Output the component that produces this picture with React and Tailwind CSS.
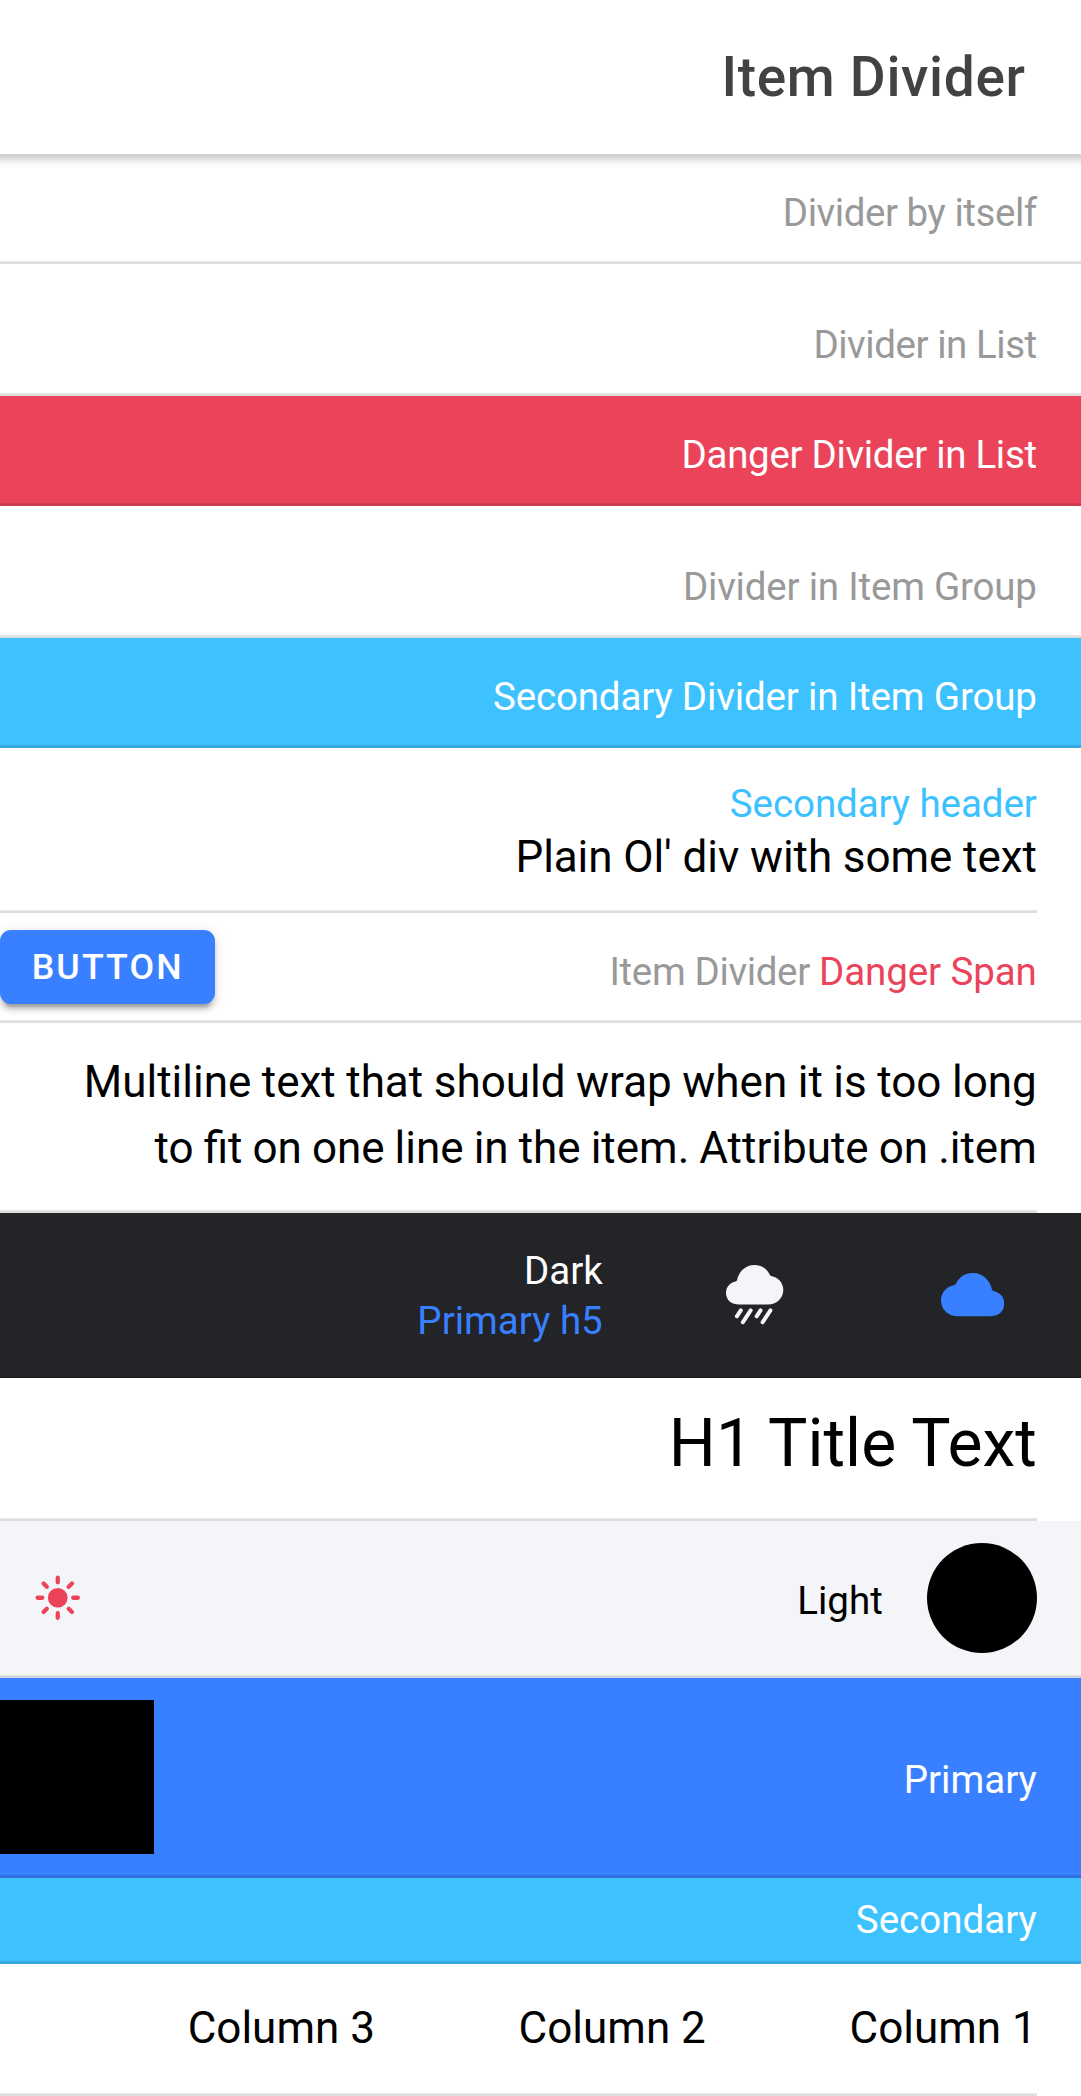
import { IoCloud, IoRainy, IoSunny } from "react-icons/io5";

const line = "shadow-[inset_0_-2.75px_0_rgba(0,0,0,0.13)]";
const small = "text-[38.5px] leading-[50px]";

function Divider({ children, className }) {
  return (
    <div className={`flex h-[110px] justify-end pr-11 pt-[34px] ${small} ${line} ${className}`}>
      {children}
    </div>
  );
}

function Item({ children, className }) {
  return (
    <div className={`mr-11 flex flex-col items-end text-right text-[44px] text-black ${line} ${className}`}>
      {children}
    </div>
  );
}

export default function App() {
  return (
    <div className="h-[2096px] w-[1081px] overflow-hidden bg-white font-[Roboto,sans-serif]">
      <div className="w-[1080.75px]">
        <header className="relative flex h-[154px] items-center justify-end bg-white pr-[55px]">
          <h1 className="text-[55px] font-medium leading-[64px] tracking-[0.0125em] text-[#424242]">Item Divider</h1>
          <div className="absolute inset-x-0 top-full h-[14px] bg-[linear-gradient(to_bottom,rgba(0,0,0,0.2)_0%,rgba(0,0,0,0.16)_22%,rgba(0,0,0,0.07)_50%,rgba(0,0,0,0.02)_75%,transparent_100%)]" />
        </header>

        <main>
          <Divider className="tracking-[-0.45px] text-[#999999]">Divider by itself</Divider>
          <section className="pt-[22px]">
            <Divider className="tracking-[-0.45px] text-[#999999]">Divider in List</Divider>
            <Divider className="bg-[#eb445a] tracking-[-0.32px] text-white">Danger Divider in List</Divider>
          </section>

          <section className="pt-[22px]">
            <Divider className="tracking-[-0.2px] text-[#999999]">Divider in Item Group</Divider>
            <Divider className="bg-[#3dc2ff] tracking-[-0.15px] text-white">Secondary Divider in Item Group</Divider>

            <Item className="h-[165px] pt-[31px]">
              <h2 className={`${small} tracking-[-0.08px] text-[#3dc2ff]`}>Secondary header</h2>
              <div className="leading-[56px] tracking-[-0.08px]">Plain Ol' div with some text</div>
            </Item>

            <div className={`flex h-[110px] justify-between pr-11 ${line}`}>
              <button className="mt-[16.5px] h-[74.25px] w-[214.5px] rounded-[11px] bg-[#3880ff] pl-px text-[35.75px] font-medium uppercase leading-[74px] tracking-[0.06em] text-white shadow-[0_8.25px_2.75px_-5.5px_rgba(0,0,0,0.2),0_5.5px_5.5px_0_rgba(0,0,0,0.14),0_2.75px_13.75px_0_rgba(0,0,0,0.12)]">
                Button
              </button>
              <div className={`pt-[34px] ${small} tracking-[-0.35px] text-[#999999]`}>
                Item Divider <span className="tracking-[-0.1px] text-[#eb445a]">Danger Span</span>
              </div>
            </div>

            <Item className="h-[189.75px] pt-[26px] leading-[66px]">
              <p className="whitespace-nowrap">
                <span className="[word-spacing:-0.4px]">Multiline text that should wrap when it is too long</span>
                <br />
                <span className="[word-spacing:-0.9px]">to fit on one line in the item. Attribute on .item</span>
              </p>
            </Item>

            <div className={`flex h-[165px] justify-end bg-[#222428] pr-[77px] text-right ${line}`}>
              <div className={`pt-[33px] ${small}`}>
                <div className="text-white">Dark</div>
                <h5 className="text-[#3880ff]">Primary h5</h5>
              </div>
              <IoRainy className="mb-[2px] ml-[120.5px] size-[63.25px] self-center text-[#f4f5f8]" />
              <IoCloud className="mb-[2px] ml-[154px] size-[63.25px] self-center text-[#3880ff]" />
            </div>

            <Item className="h-[143px] pt-[26px]">
              <h1 className="text-[66px] leading-[80px]">H1 Title Text</h1>
            </Item>

            <div className={`flex h-[156.75px] bg-[#f4f5f8] pr-11 ${line}`}>
              <IoSunny className="ml-[33px] mt-[52.25px] size-[49.5px] text-[#eb445a]" />
              <div className={`ml-auto mr-11 pt-[55px] ${small} text-black`}>Light</div>
              <div className="mt-[22px] size-[110px] rounded-full bg-black" />
            </div>

            <div className={`flex h-[200.75px] justify-between bg-[#3880ff] pr-11 ${line}`}>
              <div className="mt-[22px] size-[154px] bg-black" />
              <div className={`pt-[77px] ${small} text-white`}>Primary</div>
            </div>

            <div className={`flex h-[85.25px] justify-end bg-[#3dc2ff] pr-11 pt-[17px] ${small} text-white ${line}`}>
              Secondary
            </div>

            <div className={`mr-11 grid h-[132px] grid-cols-3 pl-11 pt-[31px] text-right text-[44px] leading-[66px] text-black ${line}`}>
              <div>Column 3</div>
              <div>Column 2</div>
              <div>Column 1</div>
            </div>
          </section>
        </main>
      </div>
    </div>
  );
}
